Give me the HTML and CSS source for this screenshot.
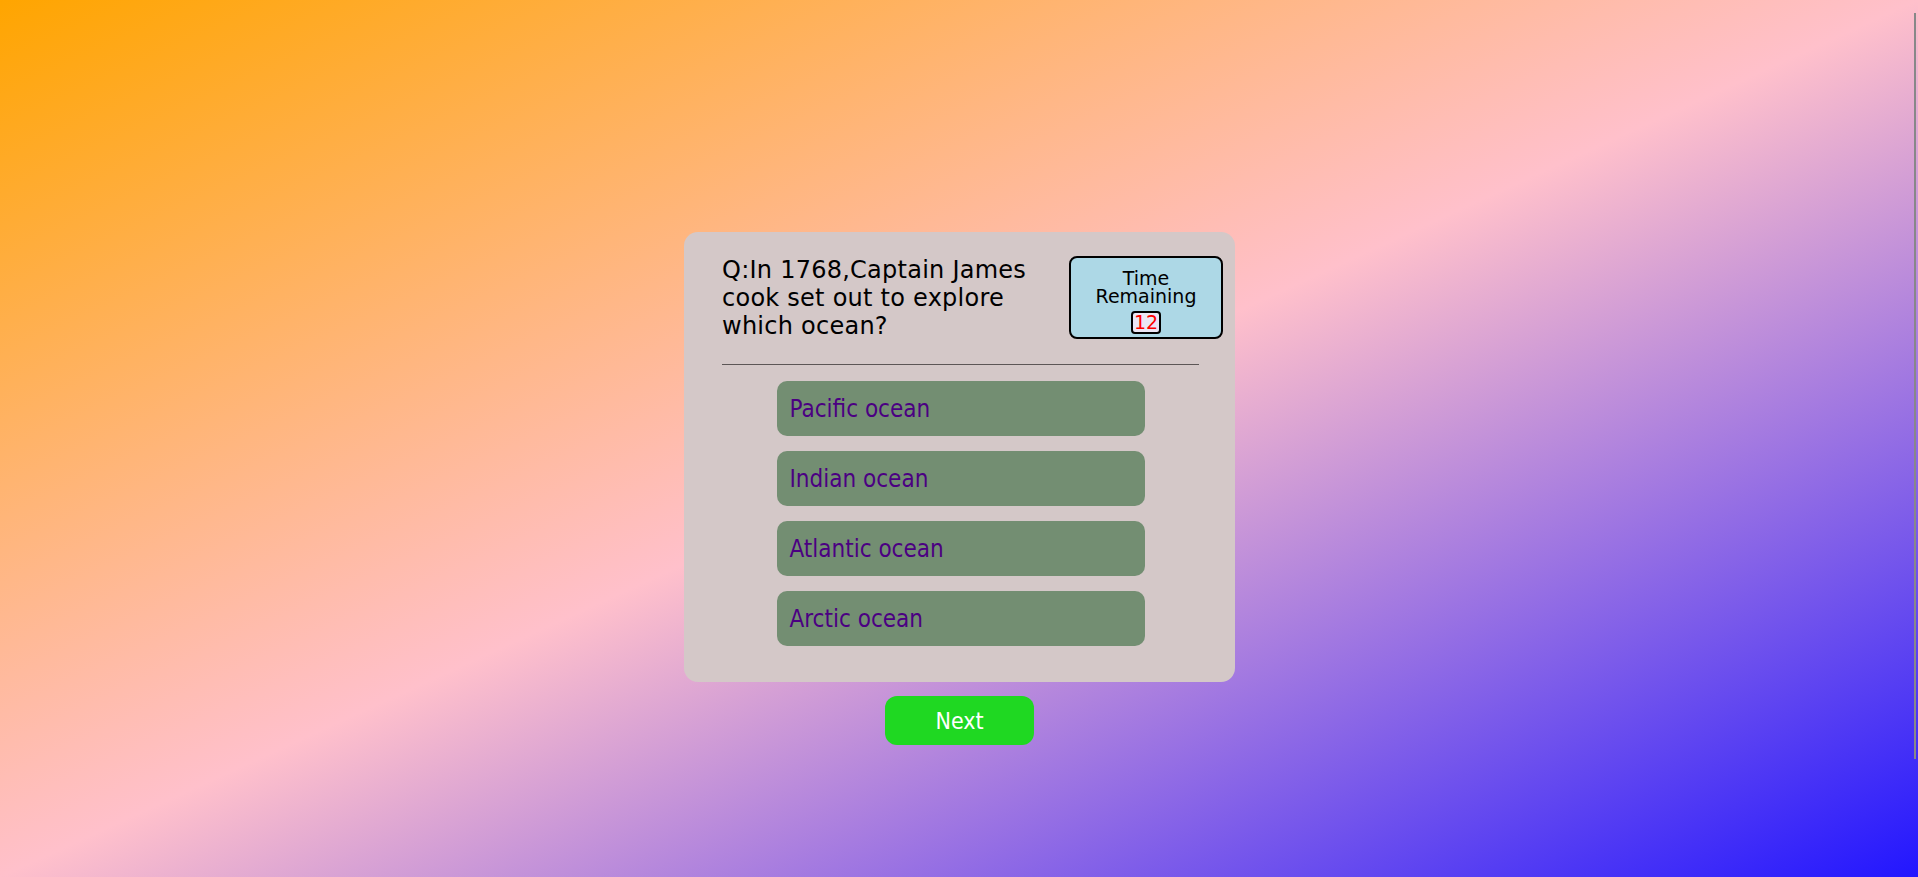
FILE: index.html
```html
<!DOCTYPE html>
<html lang="en">
<head>
<meta charset="utf-8">
<title>Quiz</title>
<link rel="stylesheet" href="styles.css">
</head>
<body>
<div class="page">
  <div class="card">
    <div class="head">
      <div class="question">Q:In 1768,Captain James cook set out to explore which ocean?</div>
      <div class="timer">
        <div class="timer-label">Time<br>Remaining</div>
        <div class="timer-count">12</div>
      </div>
    </div>
    <div class="rule"></div>
    <div class="options">
      <div class="option">Pacific ocean</div>
      <div class="option">Indian ocean</div>
      <div class="option">Atlantic ocean</div>
      <div class="option">Arctic ocean</div>
    </div>
  </div>
  <button class="next">Next</button>
</div>
<div class="scroll-thumb"></div>
</body>
</html>
```

FILE: styles.css
```css
html, body {
  margin: 0;
  height: 100%;
}
body {
  background: linear-gradient(to bottom right, orange, pink, #2216ff);
  font-family: "DejaVu Sans", sans-serif;
  overflow: hidden;
}
.page {
  display: flex;
  flex-direction: column;
  align-items: center;
  padding-top: 232px;
  padding-left: 1px;
}
.card {
  width: 551px;
  box-sizing: border-box;
  background: #d4c8c8;
  border-radius: 14px;
  padding: 24px 12px 36px 38px;
}
.head {
  display: flex;
  align-items: flex-start;
}
.question {
  flex: 1;
  font-size: 24px;
  line-height: 28px;
  letter-spacing: 0.25px;
  color: #000;
}
.timer {
  width: 154px;
  height: 83px;
  box-sizing: border-box;
  border: 2px solid #000;
  border-radius: 8px;
  background: #add8e6;
  display: flex;
  flex-direction: column;
  align-items: center;
  padding-top: 11px;
}
.timer-label {
  font-size: 19px;
  line-height: 18px;
  text-align: center;
}
.timer-count {
  margin-top: 6px;
  border: 2px solid #000;
  border-radius: 4px;
  background: #ebe6f5;
  color: red;
  font-size: 19px;
  line-height: 19px;
  padding: 0 1px;
}
.rule {
  height: 0;
  border-top: 1px solid #5c5656;
  margin: 24px 24px 0 0;
}
.options {
  margin: 16px 24px 0 0;
  display: flex;
  flex-direction: column;
  align-items: center;
  gap: 15px;
}
.option {
  width: 368px;
  height: 55px;
  box-sizing: border-box;
  background: #738e72;
  border-radius: 10px;
  display: flex;
  align-items: center;
  padding: 1px 0 0 13px;
  font-family: "DejaVu Sans Condensed", "DejaVu Sans", sans-serif;
  font-size: 24px;
  color: #4b0082;
}
.next {
  margin-top: 14px;
  width: 149px;
  height: 49px;
  border: none;
  border-radius: 12px;
  background: #1fd822;
  color: #fff;
  font-family: "DejaVu Sans Condensed", "DejaVu Sans", sans-serif;
  font-size: 23px;
  padding: 1px 0 0;
}
.scroll-thumb {
  position: fixed;
  top: 13px;
  left: 1914px;
  width: 2px;
  height: 746px;
  background: #888;
}
```
